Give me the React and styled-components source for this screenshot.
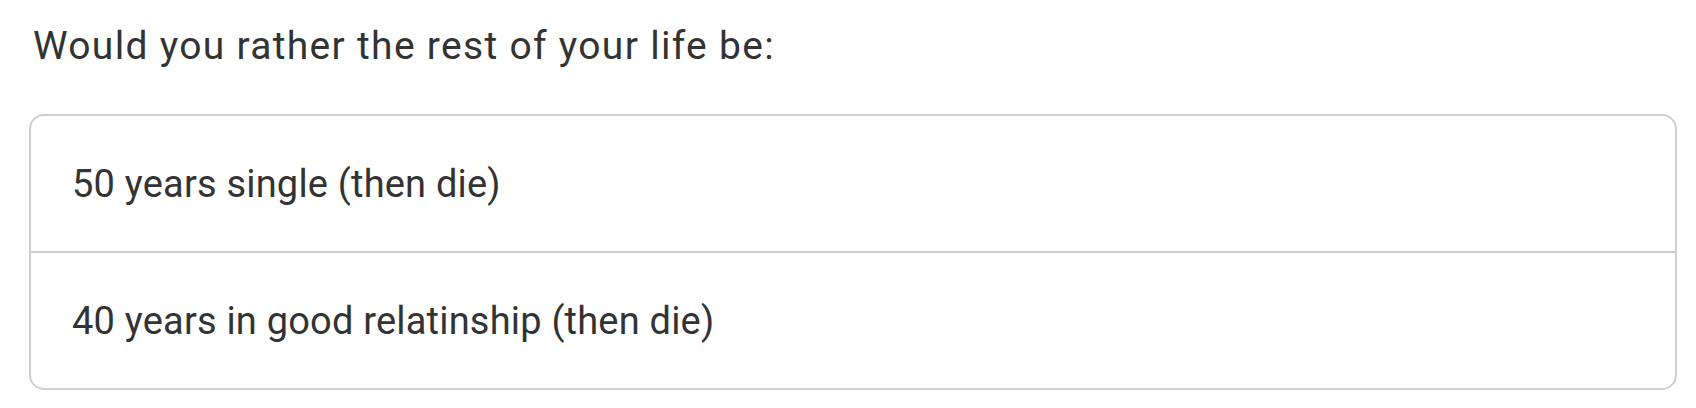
import React from "react";
import styled, { createGlobalStyle } from "styled-components";

const GlobalStyle = createGlobalStyle`
  html, body { margin: 0; padding: 0; background: #ffffff; }
  body { font-family: Roboto, "Noto Sans", Arial, sans-serif; color: #333333; }
`;

const Page = styled.div`
  padding: 14px 19px 0 29px;
  display: flex;
  flex-direction: column;
`;

const Question = styled.h2`
  margin: 0 0 36px 0;
  padding-left: 4px;
  font-weight: 400;
  font-size: 39px;
  letter-spacing: 1.3px;
  line-height: 64px;
  color: #333333;
`;

const Choices = styled.div`
  border: 2px solid #cfcfcf;
  border-radius: 15px;
  display: flex;
  flex-direction: column;
  overflow: hidden;
`;

const Choice = styled.div`
  height: 135px;
  display: flex;
  align-items: center;
  padding-left: 41px;
  font-size: 38px;
  letter-spacing: 0.2px;
  color: #333333;
  & + & {
    border-top: 2px solid #cfcfcf;
  }
`;

export default function App() {
  const options = [
    "50 years single (then die)",
    "40 years in good relatinship (then die)",
  ];
  return (
    <>
      <GlobalStyle />
      <Page>
        <Question>Would you rather the rest of your life be:</Question>
        <Choices>
          {options.map((o) => (
            <Choice key={o}>{o}</Choice>
          ))}
        </Choices>
      </Page>
    </>
  );
}
